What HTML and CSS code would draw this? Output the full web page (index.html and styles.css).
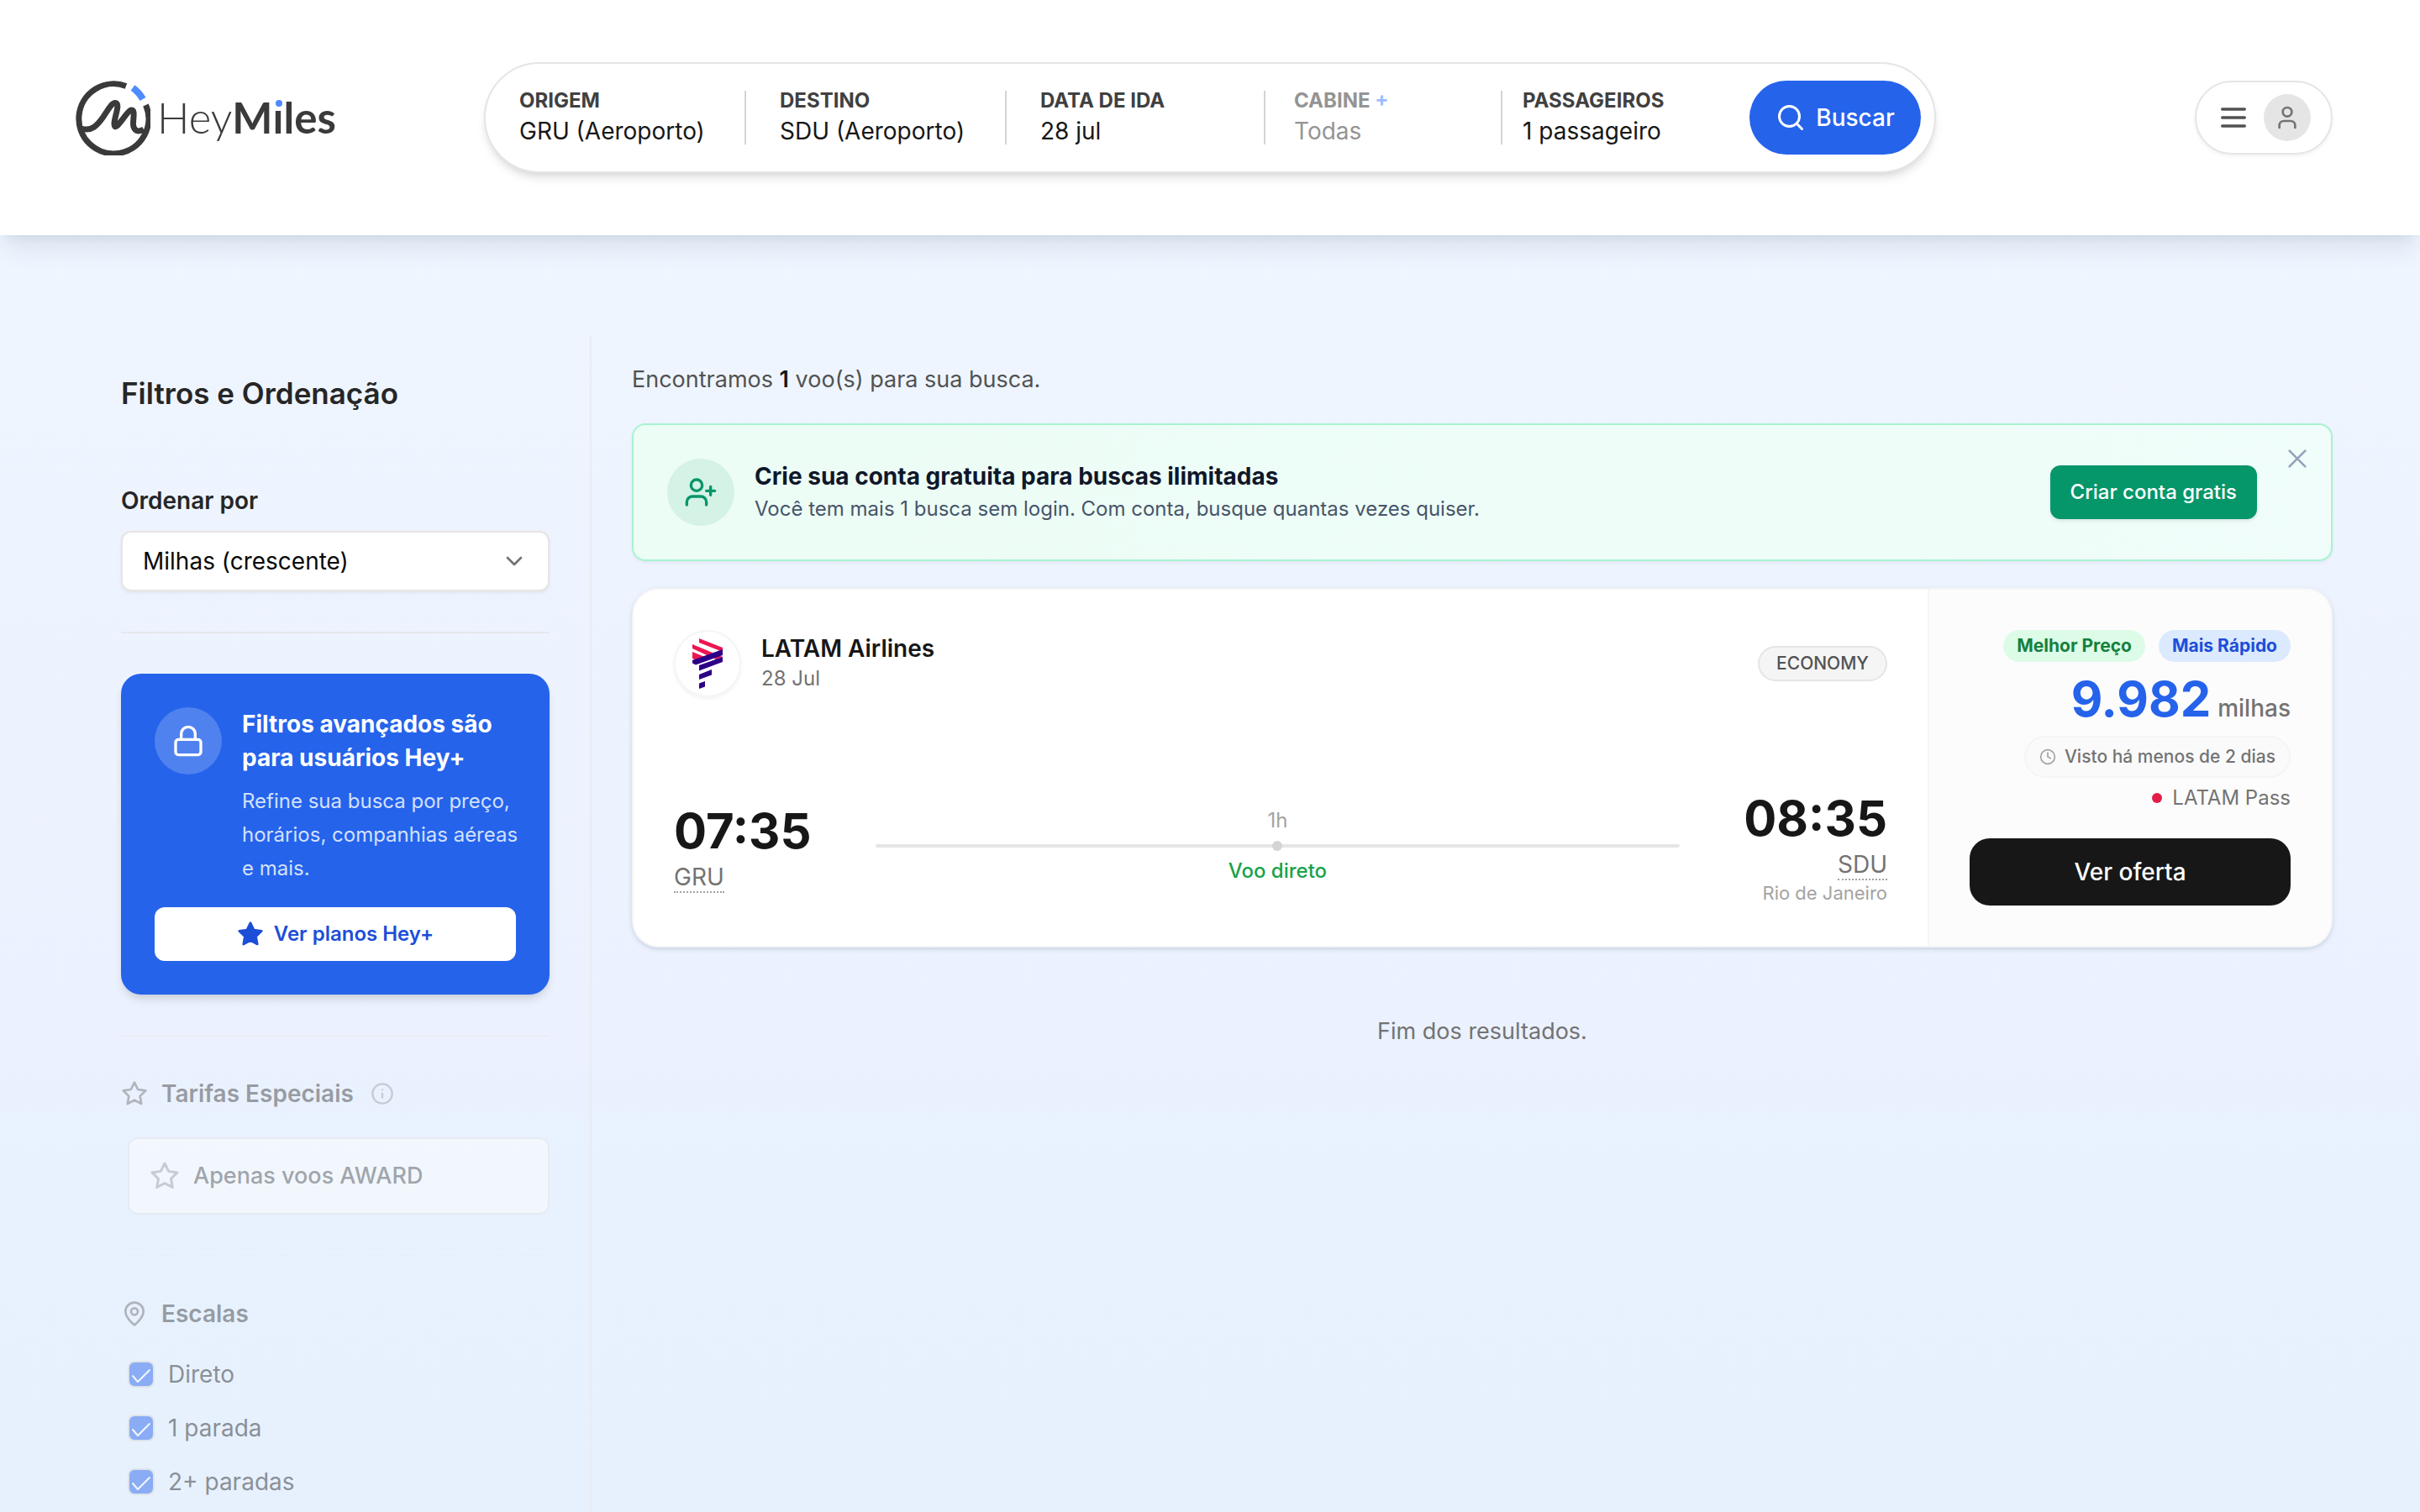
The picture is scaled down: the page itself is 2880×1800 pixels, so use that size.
FILE: index.html
```html
<!DOCTYPE html>
<html lang="pt-BR">
<head>
<meta charset="utf-8">
<title>HeyMiles</title>
<link rel="stylesheet" href="styles.css">
</head>
<body>
<header class="topbar">
  <a class="logo" href="#" aria-label="HeyMiles">
    <svg class="logo-mark" viewBox="0 0 90 90" fill="none" stroke="#3a3a3a" stroke-width="7">
      <path d="M61 7.500A41.500 41.500 0 1 0 84.500 30"/>
      <path d="M8 58C20 62 27 54 34 44C40 35 44 27.500 48 27.500C55 27.500 47 44 47 52C47 66 62 36 67.500 36C73 36 68 50 70 56C72 62 77 62 82 59"/>
      <path d="M69 9.500A42 42 0 0 1 81 23" stroke="#4f8bff" stroke-width="8"/>
    </svg>
    <span class="logo-text"><span class="logo-hey">Hey</span><span class="logo-miles">M<span class="logo-i">ı</span>les</span></span>
  </a>
  <form class="search">
    <button type="button" class="field"><span class="field-label">ORIGEM</span><span class="field-value">GRU (Aeroporto)</span></button>
    <button type="button" class="field"><span class="field-label">DESTINO</span><span class="field-value">SDU (Aeroporto)</span></button>
    <button type="button" class="field"><span class="field-label">DATA DE IDA</span><span class="field-value">28 jul</span></button>
    <button type="button" class="field field-muted"><span class="field-label">CABINE <span class="plus">+</span></span><span class="field-value">Todas</span></button>
    <button type="button" class="field field-last"><span class="field-label">PASSAGEIROS</span><span class="field-value">1 passageiro</span></button>
    <button type="button" class="search-btn">
      <svg class="i36" viewBox="0 0 24 24" fill="none" stroke="currentColor" stroke-width="2" stroke-linecap="round"><circle cx="11" cy="11" r="8"/><path d="m21 21-4.300-4.300"/></svg>
      Buscar
    </button>
  </form>
  <div class="account">
    <button type="button" class="menu-btn" aria-label="Menu">
      <svg class="i40" viewBox="0 0 24 24" fill="none" stroke="#525252" stroke-width="2" stroke-linecap="round"><path d="M4 6h16M4 12h16M4 18h16"/></svg>
      <span class="avatar"><svg class="i32" viewBox="0 0 24 24" fill="none" stroke="#737373" stroke-width="2" stroke-linecap="round" stroke-linejoin="round"><path d="M19 21v-2a4 4 0 0 0-4-4H9a4 4 0 0 0-4 4v2"/><circle cx="12" cy="7" r="4"/></svg></span>
    </button>
  </div>
</header>

<div class="page">
  <aside class="sidebar">
    <h1 class="side-title">Filtros e Ordenação</h1>
    <label class="sort-label" for="sort">Ordenar por</label>
    <div class="select-wrap">
      <select id="sort" class="select"><option>Milhas (crescente)</option></select>
      <svg class="chevron" viewBox="0 0 24 24" fill="none" stroke="#737373" stroke-width="2" stroke-linecap="round" stroke-linejoin="round"><path d="m6 9 6 6 6-6"/></svg>
    </div>
    <hr class="rule">
    <section class="promo">
      <div class="promo-row">
        <span class="promo-icon"><svg class="i40" viewBox="0 0 24 24" fill="none" stroke="#fff" stroke-width="2" stroke-linecap="round" stroke-linejoin="round"><rect x="3" y="11" width="18" height="11" rx="2"/><path d="M7 11V7a5 5 0 0 1 10 0v4"/></svg></span>
        <div>
          <h2 class="promo-title">Filtros avançados são<br>para usuários Hey+</h2>
          <p class="promo-text">Refine sua busca por preço,<br>horários, companhias aéreas<br>e mais.</p>
        </div>
      </div>
      <button type="button" class="promo-btn">
        <svg class="i32" viewBox="0 0 24 24" fill="currentColor" stroke="currentColor" stroke-width="2" stroke-linejoin="round"><path d="m12 2 3.090 6.260L22 9.270l-5 4.870 1.180 6.880L12 17.770l-6.180 3.250L7 14.140 2 9.270l6.910-1.010z"/></svg>
        Ver planos Hey+
      </button>
    </section>
    <div class="locked">
      <hr class="rule">
      <h3 class="group-title">
        <svg class="i32" viewBox="0 0 24 24" fill="none" stroke="#737373" stroke-width="2" stroke-linejoin="round"><path d="m12 2 3.090 6.260L22 9.270l-5 4.870 1.180 6.880L12 17.770l-6.180 3.250L7 14.140 2 9.270l6.910-1.010z"/></svg>
        Tarifas Especiais
        <svg class="info" viewBox="0 0 24 24" fill="none" stroke="#a3a3a3" stroke-width="2" stroke-linecap="round"><circle cx="12" cy="12" r="10"/><path d="M12 16v-4M12 8h.010"/></svg>
      </h3>
      <button type="button" class="award">
        <svg class="i36" viewBox="0 0 24 24" fill="none" stroke="#a3a3a3" stroke-width="2" stroke-linejoin="round"><path d="m12 2 3.090 6.260L22 9.270l-5 4.870 1.180 6.880L12 17.770l-6.180 3.250L7 14.140 2 9.270l6.910-1.010z"/></svg>
        Apenas voos AWARD
      </button>
      <hr class="rule rule-soft">
      <h3 class="group-title">
        <svg class="i32" viewBox="0 0 24 24" fill="none" stroke="#737373" stroke-width="2" stroke-linejoin="round"><path d="M20 10c0 6-8 12-8 12s-8-6-8-12a8 8 0 0 1 16 0z"/><circle cx="12" cy="10" r="3"/></svg>
        Escalas
      </h3>
      <div class="checks">
        <label class="check"><input type="checkbox" checked>Direto</label>
        <label class="check"><input type="checkbox" checked>1 parada</label>
        <label class="check"><input type="checkbox" checked>2+ paradas</label>
      </div>
    </div>
  </aside>

  <main class="results">
    <p class="count">Encontramos <strong>1</strong> voo(s) para sua busca.</p>
    <section class="banner">
      <span class="banner-icon"><svg class="i40" viewBox="0 0 24 24" fill="none" stroke="#059669" stroke-width="2" stroke-linecap="round" stroke-linejoin="round"><path d="M16 21v-2a4 4 0 0 0-4-4H6a4 4 0 0 0-4 4v2"/><circle cx="9" cy="7" r="4"/><path d="M19 8v6M22 11h-6"/></svg></span>
      <div class="banner-copy">
        <h2 class="banner-title">Crie sua conta gratuita para buscas ilimitadas</h2>
        <p class="banner-text">Você tem mais 1 busca sem login. Com conta, busque quantas vezes quiser.</p>
      </div>
      <button type="button" class="banner-btn">Criar conta gratis</button>
      <button type="button" class="close" aria-label="Fechar"><svg class="i32" viewBox="0 0 24 24" fill="none" stroke="#94a3b8" stroke-width="2" stroke-linecap="round"><path d="M19 5 5 19M5 5l14 14"/></svg></button>
    </section>

    <article class="flight">
      <div class="flight-main">
        <div class="flight-head">
          <span class="airline-logo">
            <svg viewBox="0 0 36 60" width="36" height="60">
              <g fill="#ed1651"><path d="M8 0l28 11v5L8 5z"/><path d="M0 7l36 15-8 3L0 12z"/><path d="M0 16l16 6.500-9 4L0 24z"/></g>
              <g fill="#2d0088"><path d="M36 13v7L4 31.500 0 29.500V26z"/><path d="M36 22v6L8 38.500V32z"/><path d="M23 37v6.500L8 49v-6z"/><path d="M15 51v6.500L8 60v-6.500z"/></g>
            </svg>
          </span>
          <div class="airline">
            <div class="airline-name">LATAM Airlines</div>
            <div class="airline-date">28 Jul</div>
          </div>
          <span class="cabin">ECONOMY</span>
        </div>
        <div class="route">
          <div class="stop">
            <div class="time">07:35</div>
            <abbr class="code">GRU</abbr>
          </div>
          <div class="leg">
            <span class="duration">1h</span>
            <span class="leg-line"><span class="leg-dot"></span></span>
            <span class="direct">Voo direto</span>
          </div>
          <div class="stop stop-end">
            <div class="time">08:35</div>
            <abbr class="code">SDU</abbr>
            <div class="city">Rio de Janeiro</div>
          </div>
        </div>
      </div>
      <div class="offer">
        <div class="badges"><span class="badge badge-green">Melhor Preço</span><span class="badge badge-blue">Mais Rápido</span></div>
        <div class="price"><span class="price-num">9.982</span><span class="price-unit">milhas</span></div>
        <div class="seen"><svg class="i20" viewBox="0 0 24 24" fill="none" stroke="#a3a3a3" stroke-width="2" stroke-linecap="round" stroke-linejoin="round"><circle cx="12" cy="12" r="10"/><path d="M12 6v6l4 2"/></svg>Visto há menos de 2 dias</div>
        <div class="program"><span class="dot"></span>LATAM Pass</div>
        <button type="button" class="offer-btn">Ver oferta</button>
      </div>
    </article>
    <p class="end">Fim dos resultados.</p>
  </main>
</div>
</body>
</html>
```
FILE: styles.css
```css
*, *::before, *::after { box-sizing: border-box; }
body, h1, h2, h3, p { margin: 0; }
h1, h2, h3 { font-weight: 600; }
button, select { font: inherit; color: inherit; border: 0; background: none; padding: 0; text-align: left; cursor: pointer; }
svg { display: block; flex: none; }
a { text-decoration: none; }

body {
  min-height: 100vh;
  display: flex;
  flex-direction: column;
  font-family: Inter, "Liberation Sans", sans-serif;
  font-size: 28px;
  line-height: 40px;
  color: #171717;
  background: linear-gradient(#f0f7ff 0, #ebf1fe 70%, #e8f2ff 77%, #e7f1fe 100%);
}

.i20 { width: 20px; height: 20px; }
.i32 { width: 32px; height: 32px; }
.i36 { width: 36px; height: 36px; }
.i40 { width: 40px; height: 40px; }

/* Top bar */
.topbar {
  display: grid;
  grid-template-columns: 1fr 3fr 1fr;
  align-items: center;
  height: 280px;
  background: #fff;
  box-shadow: 0 20px 30px -6px rgba(15, 40, 80, .1), 0 8px 12px -8px rgba(15, 40, 80, .1);
}
.logo { display: flex; align-items: center; gap: 8px; padding-left: 89px; color: #3a3a3a; }
.logo-mark { width: 90px; height: 90px; }
.logo-text { font-family: Lato, sans-serif; font-size: 51px; line-height: 60px; }
.logo-hey { font-weight: 300; }
.logo-miles { font-weight: 700; }
.logo-i { position: relative; }
.logo-i::before { content: ""; position: absolute; left: 3px; top: 10px; width: 8px; height: 8px; border-radius: 50%; background: #4f8bff; }

.search {
  display: grid;
  grid-template-columns: 310fr 310fr 308fr 282fr 294fr 204fr;
  align-items: center;
  height: 132px;
  padding-right: 16px;
  border: 2px solid #e5e5e5;
  border-radius: 66px;
  background: #fff;
  box-shadow: 0 8px 12px -2px rgba(0, 0, 0, .1), 0 4px 8px -4px rgba(0, 0, 0, .1);
}
.field {
  display: flex;
  flex-direction: column;
  justify-content: center;
  height: 64px;
  padding: 0 0 4px 40px;
  border-right: 2px solid #d4d4d4;
  white-space: nowrap;
}
.field-label { font-size: 24px; line-height: 36px; font-weight: 700; color: #404040; }
.field-value { line-height: 36px; }
.field-muted { padding-left: 34px; }
.field-muted .field-label, .field-muted .field-value { color: #949494; }
.field-muted .plus { color: #9dbcff; }
.field-last { padding-left: 24px; border-right: 0; }
.search-btn {
  display: flex;
  align-items: center;
  justify-content: center;
  gap: 12px;
  height: 88px;
  border-radius: 44px;
  background: #2563eb;
  color: #fff;
  font-weight: 500;
}
.account { display: flex; justify-content: flex-end; padding-right: 104px; }
.menu-btn {
  display: flex;
  align-items: center;
  gap: 16px;
  height: 88px;
  padding: 0 24px;
  border: 2px solid #e5e5e5;
  border-radius: 44px;
  box-shadow: 0 2px 4px rgba(0, 0, 0, .06);
}
.avatar { display: grid; place-items: center; width: 56px; height: 56px; border-radius: 50%; background: #e5e5e5; }

/* Page */
.page {
  flex: 1;
  display: grid;
  grid-template-columns: 560px minmax(0, 1fr);
  padding: 120px 104px 0 144px;
}
.sidebar { padding: 40px 48px 0 0; border-right: 2px solid #e8ebf2; }
.side-title { font-size: 35px; line-height: 56px; color: #262626; }
.sort-label { display: block; margin: 80px 0 16px; font-weight: 600; color: #262626; }
.select-wrap { position: relative; }
.select {
  display: block;
  width: 100%;
  height: 72px;
  padding: 0 24px;
  appearance: none;
  border: 2px solid #e7e5e4;
  border-radius: 12px;
  background: #fff;
  color: #0a0a0a;
  box-shadow: 0 2px 4px rgba(0, 0, 0, .06);
}
.chevron { position: absolute; right: 26px; top: 20px; width: 32px; height: 32px; pointer-events: none; }
.rule { height: 2px; margin: 48px 0; border: 0; background: #e5e7eb; }

.promo {
  padding: 40px;
  border-radius: 24px;
  background: #2563eb;
  color: #fff;
  box-shadow: 0 8px 12px -2px rgba(0, 0, 0, .1), 0 4px 8px -4px rgba(0, 0, 0, .1);
}
.promo-row { display: flex; gap: 24px; white-space: nowrap; }
.promo-icon { flex: none; display: grid; place-items: center; width: 80px; height: 80px; border-radius: 50%; background: rgba(255, 255, 255, .2); }
.promo-title { font-size: 28px; line-height: 40px; font-weight: 700; }
.promo-text { margin-top: 12px; font-size: 24px; color: #d3e0fb; }
.promo-btn {
  display: flex;
  align-items: center;
  justify-content: center;
  gap: 12px;
  width: 100%;
  height: 64px;
  margin-top: 26px;
  border-radius: 12px;
  background: #fff;
  color: #1d4ed8;
  font-size: 24px;
  font-weight: 600;
}

.locked { opacity: .48; }
.rule-soft { opacity: .6; }
.group-title { display: flex; align-items: center; gap: 16px; font-size: 28px; color: #404040; }
.info { width: 28px; height: 28px; margin-left: 4px; }
.award {
  display: flex;
  align-items: center;
  gap: 16px;
  width: calc(100% - 8px);
  height: 92px;
  margin: 32px 0 0 8px;
  padding: 0 24px;
  border: 2px solid #e5e5e5;
  border-radius: 12px;
  background: #fefefe;
  color: #525252;
  font-weight: 500;
  font-size: 27px;
}
.checks { display: flex; flex-direction: column; gap: 24px; margin: 32px 0 16px 8px; }
.check { display: flex; align-items: center; gap: 16px; color: #262626; }
.check input {
  appearance: none;
  width: 32px;
  height: 32px;
  margin: 0;
  border: 2px solid #d4d4d4;
  border-radius: 8px;
  background: #2563eb url("data:image/svg+xml,%3Csvg xmlns='http://www.w3.org/2000/svg' viewBox='0 0 28 28' fill='none' stroke='white' stroke-width='2' stroke-linecap='round' stroke-linejoin='round'%3E%3Cpath d='M4 16l6 7L24 9'/%3E%3C/svg%3E") center / 28px no-repeat;
}

/* Results */
.results { padding: 32px 0 0 48px; }
.count { font-size: 27px; color: #525252; }
.count strong { font-weight: 600; color: #171717; }
.banner {
  position: relative;
  display: flex;
  align-items: center;
  gap: 24px;
  margin-top: 32px;
  padding: 40px 88px 40px 40px;
  border: 2px solid #a7f3d0;
  border-radius: 16px;
  background: linear-gradient(to right, #ecfdf5, #f0fdfa);
  box-shadow: 0 2px 4px rgba(0, 0, 0, .06);
}
.banner-icon { display: grid; place-items: center; width: 80px; height: 80px; border-radius: 50%; background: #d5f2e6; }
.banner-copy { flex: 1; }
.banner-title { font-size: 28px; line-height: 40px; font-weight: 700; color: #0f172a; }
.banner-text { font-size: 24px; line-height: 38px; color: #475569; }
.banner-btn { height: 64px; padding: 0 24px; border-radius: 12px; background: #059669; color: #fff; font-size: 24px; font-weight: 500; box-shadow: 0 2px 4px rgba(0, 0, 0, .1); }
.close { position: absolute; right: 24px; top: 24px; }

.flight {
  display: grid;
  grid-template-columns: minmax(0, 1fr) 480px;
  margin-top: 32px;
  border: 2px solid #f5f5f5;
  border-radius: 32px;
  background: #fff;
  overflow: hidden;
  box-shadow: 0 2px 6px rgba(15, 40, 80, .12), 0 2px 4px -2px rgba(15, 40, 80, .12);
}
.flight-main { display: flex; flex-direction: column; justify-content: space-between; padding: 48px; }
.flight-head { display: flex; align-items: center; gap: 24px; }
.airline-logo { display: grid; place-items: center; width: 80px; height: 80px; border: 2px solid #f5f5f5; border-radius: 50%; box-shadow: 0 2px 4px rgba(0, 0, 0, .06); }
.airline { flex: 1; }
.airline-name { line-height: 36px; font-weight: 600; }
.airline-date { font-size: 24px; line-height: 36px; color: #737373; }
.cabin { padding: 0 20px; border: 2px solid #e5e5e5; border-radius: 21px; background: #f5f5f5; color: #525252; font-size: 21px; line-height: 38px; font-weight: 500; }
.route { display: flex; align-items: center; gap: 76px; }
.stop { display: flex; flex-direction: column; align-items: flex-start; }
.stop-end { align-items: flex-end; }
.time { font-size: 58px; line-height: 60px; font-weight: 700; }
.code { margin-top: 8px; line-height: 34px; color: #737373; border-bottom: 2px dotted #a3a3a3; }
.city { font-size: 22px; line-height: 30px; color: #a3a3a3; }
.leg { flex: 1; display: flex; flex-direction: column; align-items: center; padding-bottom: 8px; font-size: 24px; line-height: 32px; }
.duration { color: #a3a3a3; }
.leg-line { display: flex; align-items: center; justify-content: center; width: 100%; height: 4px; margin: 12px 0; border-radius: 2px; background: #e5e5e5; }
.leg-dot { flex: none; width: 12px; height: 12px; border-radius: 50%; background: #d4d4d4; }
.direct { color: #16a34a; font-weight: 500; }

.offer { display: flex; flex-direction: column; align-items: flex-end; gap: 8px; padding: 48px; border-left: 2px solid #f5f5f5; background: #fcfcfc; white-space: nowrap; }
.badges { display: flex; gap: 16px; }
.badge { padding: 0 16px; border-radius: 19px; font-size: 21px; line-height: 38px; font-weight: 700; }
.badge-green { background: #dcfce7; color: #15803d; }
.badge-blue { background: #dbeafe; color: #1d4ed8; }
.price { display: flex; align-items: baseline; gap: 8px; }
.price-num { font-size: 58px; line-height: 72px; font-weight: 700; color: #2563eb; }
.price-unit { color: #737373; font-weight: 500; }
.seen { display: flex; align-items: center; gap: 10px; height: 50px; padding: 0 16px; border: 2px solid #f5f5f5; border-radius: 25px; background: #fafafa; color: #737373; font-size: 21px; font-weight: 500; }
.program { display: flex; align-items: center; gap: 12px; font-size: 24px; line-height: 32px; color: #737373; }
.dot { width: 12px; height: 12px; border-radius: 50%; background: #e11d48; }
.offer-btn { width: 100%; height: 80px; margin-top: 24px; border-radius: 24px; background: #171717; color: #fff; font-weight: 500; text-align: center; }
.end { margin-top: 80px; font-size: 27px; text-align: center; color: #737373; }
```
